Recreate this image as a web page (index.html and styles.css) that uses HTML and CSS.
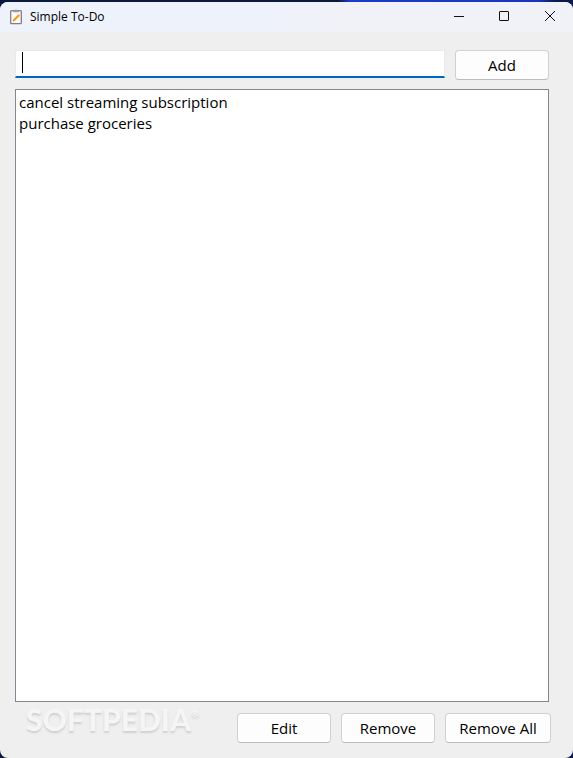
FILE: index.html
```html
<!DOCTYPE html>
<html lang="en">
<head>
  <meta charset="UTF-8" />
  <meta name="viewport" content="width=device-width, initial-scale=1" />
  <title>Simple To-Do</title>
  <link rel="stylesheet" href="styles.css">
</head>
<body>
  <div class="window">
    <header class="titlebar">
      <svg class="app-icon" viewBox="0 0 14 16" width="14" height="16">
        <rect x="1.7" y="1.7" width="10.6" height="13" rx="0.8" fill="#fbfbfd" stroke="#8d7a76" stroke-width="1.3" />
        <path d="M4 3.2V1.6h1.8a1.2 1.2 0 0 1 2.4 0H10v1.6z" fill="#90a4ae" />
        <path d="M4.9 11.3L9.8 6.2" stroke="#ff9800" stroke-width="2" />
        <path d="M4 12.4l.4-1.8 1.3 1.2z" fill="#8a6a50" />
        <path d="M9.5 6.5l.8-.8" stroke="#f0a080" stroke-width="2" />
      </svg>
      <h1>Simple To-Do</h1>
      <div class="window-controls">
        <button type="button" aria-label="Minimize">
          <svg viewBox="0 0 12 12" width="12" height="12"><path d="M2 6.5h10" /></svg>
        </button>
        <button type="button" aria-label="Maximize">
          <svg viewBox="0 0 12 12" width="12" height="12"><rect x="1.5" y="1.5" width="9" height="9" rx="0.5" /></svg>
        </button>
        <button type="button" aria-label="Close">
          <svg viewBox="0 0 12 12" width="12" height="12"><path d="M1 1l10 10M11 1L1 11" /></svg>
        </button>
      </div>
    </header>

    <main class="content">
      <form class="add-row" id="add-form">
        <div class="field">
          <input type="text" id="task" aria-label="New task" autocomplete="off" />
          <span class="caret"></span>
        </div>
        <button type="submit" class="btn">Add</button>
      </form>

      <ul class="tasks" id="tasks">
        <li>cancel streaming subscription</li>
        <li>purchase groceries</li>
      </ul>

      <div class="actions">
        <div class="watermark">SOFTPEDIA<sup>®</sup></div>
        <button type="button" class="btn">Edit</button>
        <button type="button" class="btn">Remove</button>
        <button type="button" class="btn btn-wide">Remove All</button>
      </div>
    </main>
  </div>
</body>
</html>
```
FILE: styles.css
```css
* {
  margin: 0;
  padding: 0;
  box-sizing: border-box;
}

body {
  min-height: 100vh;
  display: flex;
  padding-top: 2px;
  background: linear-gradient(90deg, #0b1a3c 59%, #1a3cc8 61%, #1a34c0 94%, #0b1a4c 97%);
  font-family: "Open Sans", "Noto Sans", sans-serif;
  font-size: 15px;
  color: #000;
}

.window {
  flex: 1;
  display: flex;
  flex-direction: column;
  background: #efefef;
  border-radius: 8px;
  overflow: hidden;
}

/* Title bar */
.titlebar {
  display: flex;
  align-items: center;
  height: 30px;
  padding-left: 9px;
  background: linear-gradient(90deg, #eef2fb 45%, #f1f2f8 60%);
}

.titlebar h1 {
  margin-left: 7px;
  font-size: 12px;
  font-weight: normal;
  line-height: 16px;
}

.window-controls {
  display: flex;
  align-self: stretch;
  margin-left: auto;
}

.window-controls button {
  display: flex;
  align-items: center;
  justify-content: center;
  width: 46px;
  padding-bottom: 2px;
  border: none;
  background: transparent;
}

.window-controls svg {
  fill: none;
  stroke: #111;
}

/* Content */
.content {
  flex: 1;
  display: flex;
  flex-direction: column;
  padding: 18px 24px 15px 15px;
}

.add-row {
  display: flex;
  gap: 10px;
  margin-bottom: 9px;
}

.field {
  position: relative;
  flex: 1;
  height: 28px;
}

.field input {
  width: 100%;
  height: 100%;
  padding: 0 7px;
  border: 1px solid #e9e9e9;
  border-bottom: 2px solid #0067c0;
  background: #fff;
  font: inherit;
  outline: none;
}

.caret {
  position: absolute;
  left: 7px;
  top: 2px;
  width: 1px;
  height: 21px;
  background: #000;
}

.btn {
  width: 94px;
  height: 30px;
  border: 1px solid #d0d0d0;
  border-bottom-color: #bcbcbc;
  border-radius: 4px;
  background: #fdfdfd;
  font: inherit;
  color: #000;
}

.btn-wide {
  width: 106px;
}

.tasks {
  flex: 1;
  padding: 2px 3px;
  border: 1px solid #828790;
  background: #fff;
  list-style: none;
}

.tasks li {
  line-height: 21px;
}

.actions {
  display: flex;
  gap: 10px;
  margin: 11px -2px 0 0;
}

.watermark {
  margin-right: auto;
  padding-left: 11px;
  font-family: Lato, sans-serif;
  font-size: 30px;
  font-weight: 900;
  line-height: 10px;
  color: #f5f5f5;
  text-shadow: 0 2px 2px #d0d0d0;
}

.watermark sup {
  font-size: 10px;
  line-height: 0;
  vertical-align: 14px;
}
```
